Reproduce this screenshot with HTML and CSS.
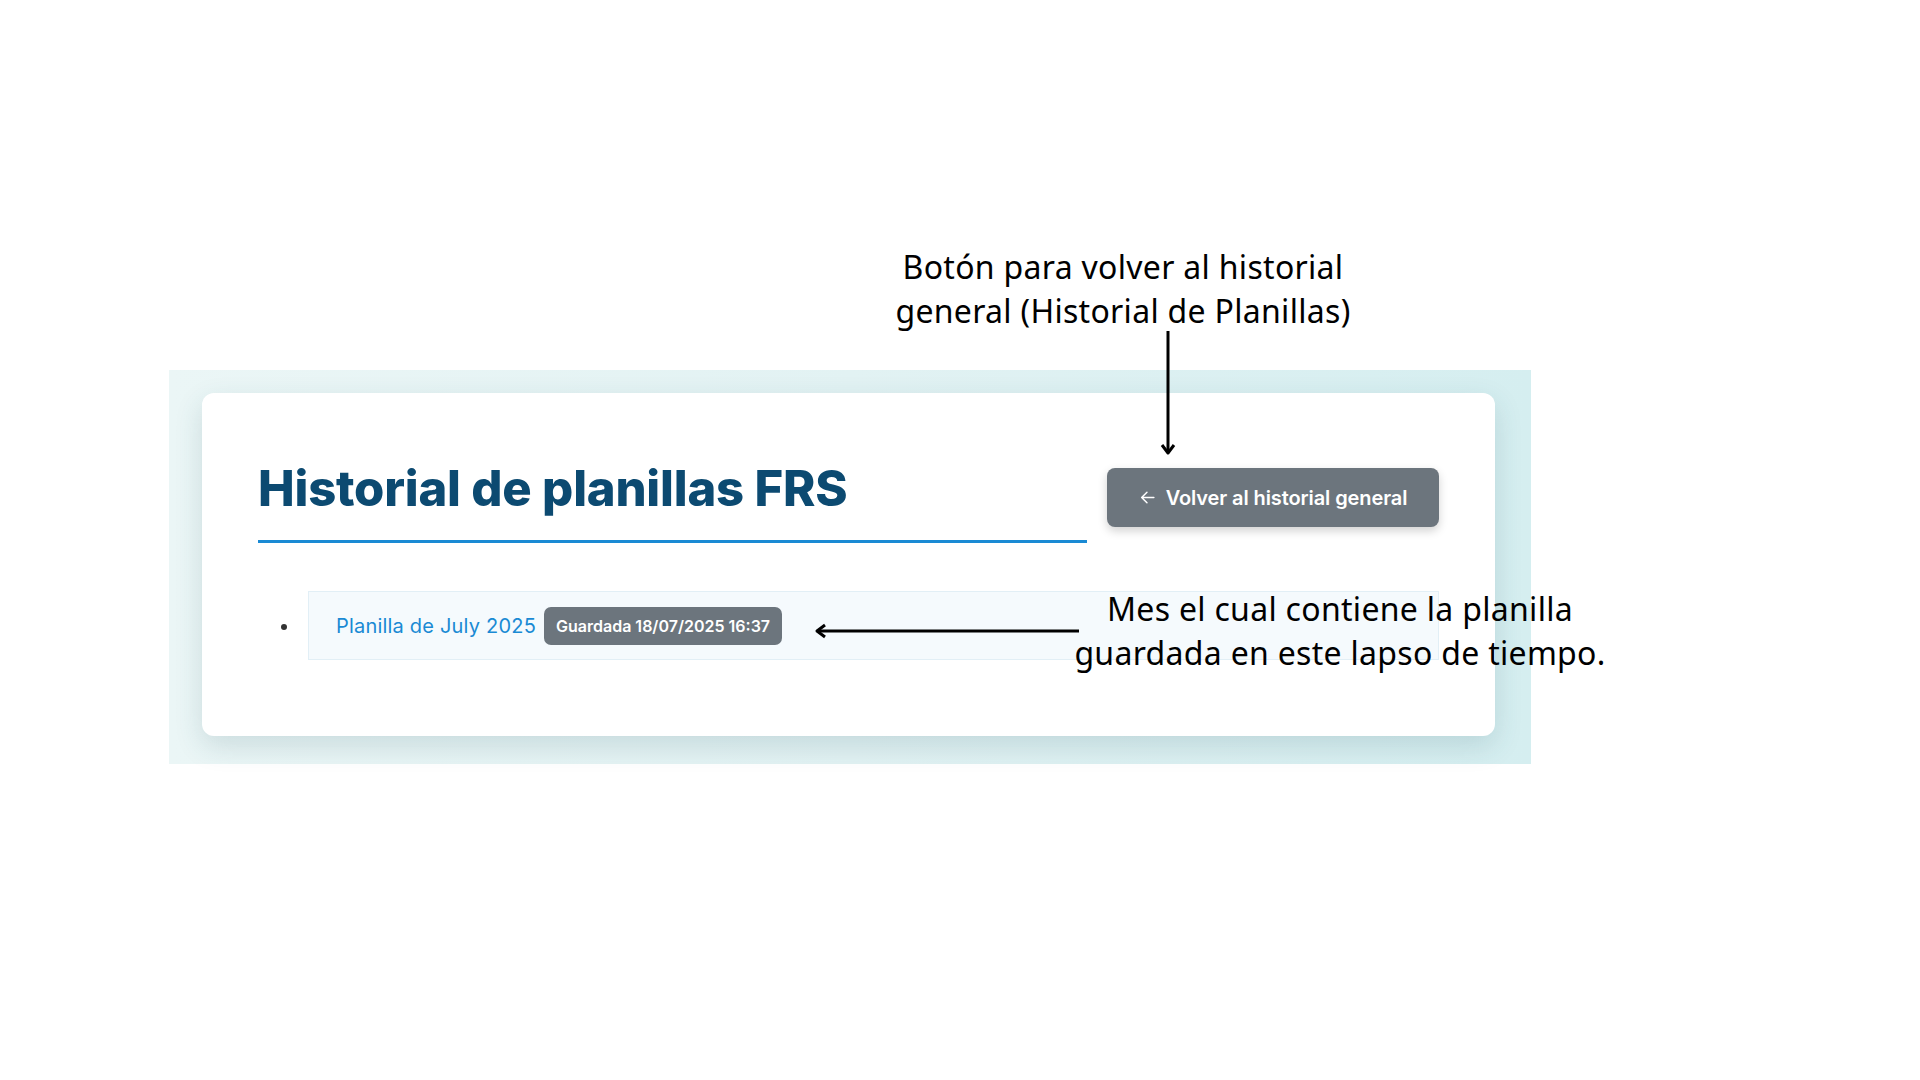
FILE: index.html
```html
<!DOCTYPE html>
<html lang="es">
<head>
    <meta charset="UTF-8">
    <meta name="viewport" content="width=device-width, initial-scale=1.0">
    <title>Historial de planillas FRS</title>
    <link rel="stylesheet" href="styles.css">
</head>
<body>
    <div class="slide">
        <div class="shot">
            <div class="card">
                <div class="card-head">
                    <h1 class="title">Historial de planillas FRS</h1>
                    <button class="back-btn">
                        <svg class="back-icon" viewBox="0 0 16 16" width="17" height="17">
                            <path d="M14 8H2.5M7.5 3L2.5 8l5 5" fill="none" stroke="currentColor" stroke-width="1.4" stroke-linecap="round" stroke-linejoin="round"/>
                        </svg>
                        Volver al historial general
                    </button>
                </div>
                <ul class="sheet-list">
                    <li class="sheet-item">
                        <a href="#" class="sheet-link">Planilla de July 2025</a>
                        <span class="badge">Guardada 18/07/2025 16:37</span>
                    </li>
                </ul>
            </div>
        </div>

        <!-- notas encima de la captura -->
        <p class="note note-top">Botón para volver al historial<br>general (Historial de Planillas)</p>
        <svg class="arrow arrow-down" width="20" height="126" viewBox="0 0 20 126">
            <path d="M10 0V122" stroke="#000" stroke-width="3"/>
            <path d="M4 114l6 8 6-8" fill="none" stroke="#000" stroke-width="3" stroke-linejoin="round"/>
        </svg>
        <svg class="arrow arrow-left" width="266" height="20" viewBox="0 0 266 20">
            <path d="M4 10H266" stroke="#000" stroke-width="3"/>
            <path d="M12 4L4 10l8 6" fill="none" stroke="#000" stroke-width="3" stroke-linejoin="round"/>
        </svg>
        <p class="note note-right">Mes el cual contiene la planilla<br>guardada en este lapso de tiempo.</p>
    </div>
</body>
</html>
```

FILE: styles.css
```css
body {
    margin: 0;
    padding: 0;
    background-color: #ffffff;
    font-family: Inter, "Noto Sans", sans-serif;
}
.slide {
    position: relative;
    width: 1920px;
    height: 1080px;
    overflow: hidden;
}
.shot {
    margin: 370px 0 0 169px;
    width: 1362px;
    height: 394px;
    box-sizing: border-box;
    padding: 23px 36px 28px 33px;
    background: linear-gradient(90deg, #ebf6f6 0%, #e2f2f3 50%, #d5eef0 100%);
}
.card {
    height: 100%;
    box-sizing: border-box;
    background-color: #ffffff;
    border-radius: 12px;
    box-shadow: 0 10px 28px rgba(40, 90, 100, 0.16);
    padding: 56px 56px 0 56px;
}
.card-head {
    display: flex;
    align-items: flex-start;
    gap: 20px;
}
.title {
    flex: 1;
    margin: 0;
    font-size: 49px;
    font-weight: 800;
    letter-spacing: -0.2px;
    line-height: 60px;
    color: #0c4a71;
    padding-top: 10px;
    padding-bottom: 21px;
    border-bottom: 3px solid #1a8ad4;
}
.back-btn {
    margin-top: 19px;
    width: 332px;
    height: 59px;
    display: flex;
    align-items: center;
    justify-content: center;
    gap: 10px;
    background-color: #6c757d;
    color: #ffffff;
    border: none;
    border-radius: 8px;
    box-shadow: 0 4px 10px rgba(0, 0, 0, 0.18);
    font-family: Inter, sans-serif;
    font-size: 20px;
    font-weight: 600;
    letter-spacing: -0.1px;
    cursor: pointer;
}
.back-icon {
    flex: none;
}
.sheet-list {
    margin: 48px 0 0 0;
    padding-left: 50px;
    color: #333;
}
.sheet-item {
    display: flex;
    align-items: center;
    height: 69px;
    box-sizing: border-box;
    padding-left: 27px;
    background-color: #f5fafd;
    border: 1px solid #e2eff6;
    position: relative;
}
.sheet-item::before {
    content: "";
    position: absolute;
    left: -28px;
    top: 32px;
    width: 6px;
    height: 6px;
    border-radius: 50%;
    background-color: #333;
}
.sheet-link {
    color: #1a8ad4;
    text-decoration: none;
    font-size: 20px;
    font-weight: 400;
    letter-spacing: 0.2px;
}
.badge {
    margin-left: 8px;
    padding: 0 12px;
    height: 38px;
    display: flex;
    align-items: center;
    background-color: #6c757d;
    color: #ffffff;
    border-radius: 7px;
    font-size: 16px;
    font-weight: 600;
    letter-spacing: 0;
}
.note {
    position: absolute;
    margin: 0;
    text-align: center;
    font-family: "Noto Sans", sans-serif;
    font-size: 32px;
    letter-spacing: 0.3px;
    line-height: 44px;
    color: #000;
}
.note-top {
    left: 823px;
    top: 245px;
    width: 600px;
}
.note-right {
    left: 1010px;
    top: 587px;
    width: 660px;
}
.arrow {
    position: absolute;
}
.arrow-down {
    left: 1158px;
    top: 331px;
}
.arrow-left {
    left: 813px;
    top: 621px;
}
```
